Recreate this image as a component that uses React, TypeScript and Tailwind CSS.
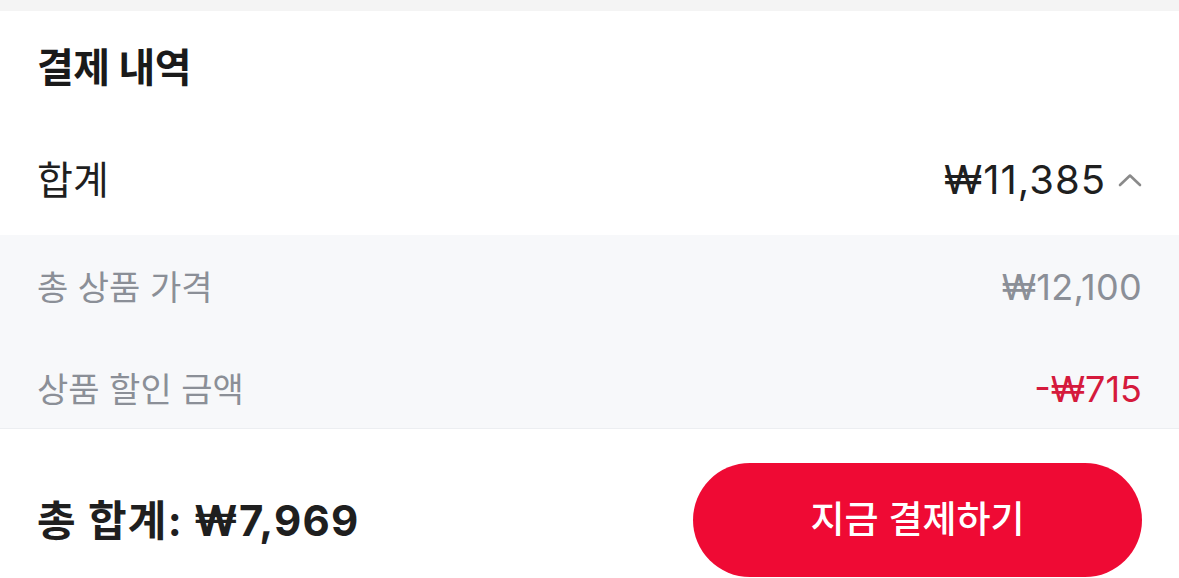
import React from "react";

const font = { fontFamily: "Inter, 'Noto Sans CJK KR', sans-serif" };

export default function App() {
  return (
    <div className="w-[1179px] h-[578px] overflow-hidden bg-white" style={font}>
      <div className="h-[11px] bg-[#f4f4f4]" />
      <div className="px-[37px]">
        <div className="h-[114px] flex items-center">
          <h2 className="text-[40px] font-bold text-[#1a1a1a] tracking-[-0.5px]">결제 내역</h2>
        </div>
        <div className="h-[110px] flex items-center justify-between">
          <span className="text-[39px] text-[#1f1f1f]">합계</span>
          <div className="flex items-center gap-[12px]">
            <span className="text-[40px] text-[#1f1f1f] tracking-[1px]">₩11,385</span>
            <svg width="24" height="14" viewBox="0 0 24 14" fill="none">
              <path d="M2 12L12 2.5L22 12" stroke="#8a8a8a" strokeWidth="2.6" strokeLinecap="round" strokeLinejoin="round" />
            </svg>
          </div>
        </div>
      </div>
      <div className="bg-[#f7f8fa] px-[37px] pt-[26px] pb-[13px] flex flex-col gap-[50px]">
        <div className="h-[52px] flex items-center justify-between text-[#8b8f97]">
          <span className="text-[34px]">총 상품 가격</span>
          <span className="text-[36px] tracking-[0.3px]">₩12,100</span>
        </div>
        <div className="h-[52px] flex items-center justify-between">
          <span className="text-[34px] text-[#8b8f97]">상품 할인 금액</span>
          <span className="text-[36px] text-[#d51a3c]">-₩715</span>
        </div>
      </div>
      <div className="border-t border-[#eceef1] px-[37px] pt-[34px] flex items-start justify-between">
        <div className="h-[114px] flex items-center">
          <span className="text-[42px] font-bold text-[#1f1f1f] tracking-[1.2px]">총 합계: ₩7,969</span>
        </div>
        <button className="w-[449px] h-[114px] rounded-full bg-[#ef0a34] text-white text-[37px] font-medium flex items-center justify-center">
          지금 결제하기
        </button>
      </div>
    </div>
  );
}
